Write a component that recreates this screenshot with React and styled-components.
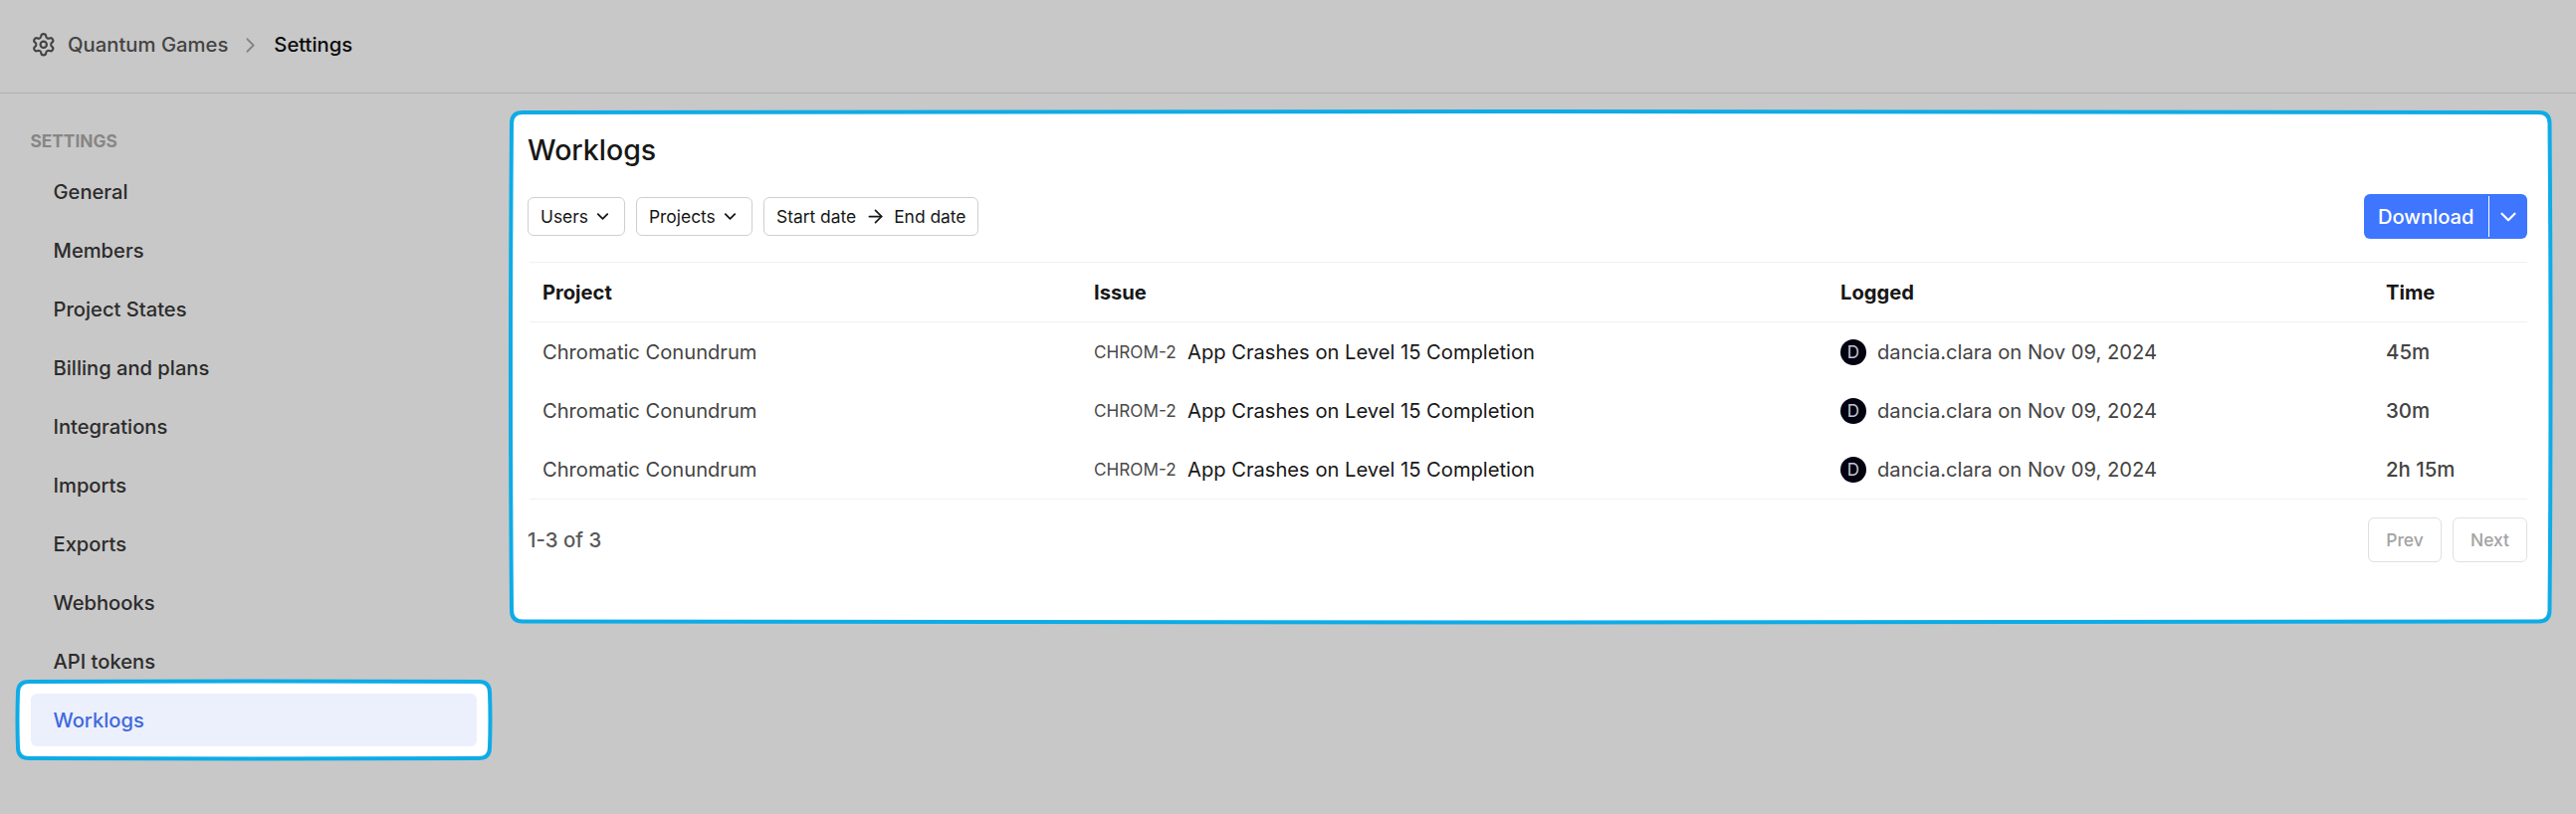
import React from 'react';
import styled, { createGlobalStyle } from 'styled-components';
import { Settings, ChevronRight, ChevronDown, ArrowRight } from 'lucide-react';

const GlobalStyle = createGlobalStyle`
  *, *::before, *::after { box-sizing: border-box; }
  body { margin: 0; background: #c8c8c8; }
  button { font: inherit; background: none; border: 0; padding: 0; margin: 0; color: inherit; }
`;

const Page = styled.div`
  display: flex;
  flex-direction: column;
  width: 100%;
  height: 818px;
  overflow: hidden;
  background: #c8c8c8;
  color: #171717;
  font-family: Inter, 'Liberation Sans', sans-serif;
  font-size: 20.15px;
  line-height: 28px;
`;

const Header = styled.header`
  display: flex;
  align-items: center;
  height: 94px;
  padding: 0 0 3px 31px;
  border-bottom: 1px solid #b0b0b0;
  font-size: 20.25px;
  font-weight: 500;
  color: #444;
`;

const CrumbLink = styled.a`
  display: flex;
  align-items: center;
  gap: 11.5px;
  margin-right: 10px;
`;

const CrumbCurrent = styled.span`
  margin-left: 11px;
  color: #0c0c0c;
`;

const Body = styled.div`
  display: flex;
  flex: 1;
  align-items: flex-start;
`;

const Sidebar = styled.aside`
  width: 513px;
  padding: 34px 34px 0 31px;
`;

const SidebarTitle = styled.h2`
  margin: 0 0 10px -0.5px;
  font-size: 17.3px;
  line-height: 28px;
  font-weight: 700;
  color: #868686;
`;

const NavList = styled.nav`
  display: flex;
  flex-direction: column;
  gap: 6px;
`;

const NavItem = styled.a`
  position: relative;
  display: flex;
  align-items: center;
  height: 53px;
  padding-left: 22.5px;
  border-radius: 6px;
  font-weight: 500;
  color: ${(p) => (p.$active ? '#4069dc' : '#2c2c2c')};
  background: ${(p) => (p.$active ? '#ecf0fd' : 'transparent')};
  isolation: isolate;
`;

const Outline = styled.svg`
  position: absolute;
  z-index: -1;
  left: ${(p) => p.$left}px;
  top: ${(p) => p.$top}px;
  overflow: visible;
`;

const ActiveItem = styled.div`
  position: relative;
  isolation: isolate;
`;

const Panel = styled.main`
  position: relative;
  isolation: isolate;
  width: 2050px;
  height: 514px;
  margin-top: 18px;
  padding: 20px 24px 0 17px;
`;

const Title = styled.h1`
  margin: 0;
  font-size: 28.5px;
  line-height: 38px;
  font-weight: 500;
`;

const Toolbar = styled.div`
  display: flex;
  align-items: center;
  justify-content: space-between;
  height: 45px;
  margin-top: 25px;
`;

const Filters = styled.div`
  display: flex;
  gap: 11px;
`;

const FilterButton = styled.button`
  display: flex;
  align-items: center;
  gap: ${(p) => p.$gap || 5}px;
  width: ${(p) => p.$width}px;
  height: 39px;
  padding-left: 12px;
  border: 1px solid #cfcfcf;
  border-radius: 6px;
  font-size: 17.4px;
  white-space: nowrap;
`;

const DownloadGroup = styled.div`
  display: flex;
  align-items: center;
  width: 164px;
  height: 45px;
  border-radius: 6px;
  background: #3f76ff;
  color: #fff;
  font-weight: 500;
`;

const DownloadButton = styled.button`
  width: 126px;
  height: 41px;
  padding-left: 14px;
  border-right: 1px solid #fff;
  text-align: left;
`;

const DownloadToggle = styled.button`
  display: flex;
  flex: 1;
  align-items: center;
  justify-content: center;
`;

const Table = styled.div`
  margin: 23px 0 0 2px;
  border-top: 1px solid #f0f0f0;
  border-bottom: 1px solid #f0f0f0;
`;

const Row = styled.div`
  display: grid;
  grid-template-columns: 554px 750px 548px 1fr;
  align-items: center;
  height: ${(p) => (p.$head ? 60 : 59)}px;
  padding-left: 13px;
  border-bottom: ${(p) => (p.$head ? '1px solid #f0f0f0' : '0')};
  font-weight: ${(p) => (p.$head ? 700 : 400)};
`;

const Cell = styled.div`
  display: flex;
  align-items: center;
  font-size: ${(p) => (p.$medium ? '20.4px' : 'inherit')};
  font-weight: ${(p) => (p.$medium ? 500 : 'inherit')};
  color: ${(p) => (p.$muted ? '#444' : '#171717')};
`;

const IssueKey = styled.span`
  width: 94px;
  font-size: 17.15px;
  color: #4a4a4a;
`;

const Avatar = styled.span`
  display: flex;
  align-items: center;
  justify-content: center;
  width: 26px;
  height: 26px;
  margin: 0 11px 0 0;
  border-radius: 50%;
  background: #020210;
  color: #c4c4d2;
  font-size: 17px;
`;

const Pagination = styled.footer`
  display: flex;
  align-items: center;
  justify-content: space-between;
  height: 45px;
  margin-top: 18px;
  font-size: 20.4px;
  font-weight: 500;
  color: #5a5a5a;
`;

const PageButtons = styled.div`
  display: flex;
  gap: 11px;
`;

const PageButton = styled.button`
  width: ${(p) => p.$width}px;
  height: 45px;
  border: 1px solid #e0e0e0;
  border-radius: 6px;
  font-size: 17.4px;
  font-weight: 500;
  color: #a3a3a3;
`;

const navItems = ['General', 'Members', 'Project States', 'Billing and plans', 'Integrations', 'Imports', 'Exports', 'Webhooks', 'API tokens'];
const durations = ['45m', '30m', '2h 15m'];

function HighlightOutline({ width: w, height: h, left, top, bulge: b }) {
  const r = 11;
  const d = `M${r} 0 Q${w / 2} ${-b} ${w - r} 0 Q${w} 0 ${w} ${r} Q${w + b} ${h / 2} ${w} ${h - r} Q${w} ${h} ${w - r} ${h} Q${w / 2} ${h + b} ${r} ${h} Q0 ${h} 0 ${h - r} Q${-b} ${h / 2} 0 ${r} Q0 0 ${r} 0Z`;
  return (
    <Outline width={w} height={h} $left={left} $top={top} aria-hidden="true">
      <path d={d} fill="#fff" stroke="#0eace6" strokeWidth="4" />
    </Outline>
  );
}

export default function App() {
  return (
    <Page>
      <GlobalStyle />
      <Header>
        <CrumbLink><Settings size={25.5} strokeWidth={2} />Quantum Games</CrumbLink>
        <ChevronRight size={25} strokeWidth={1.7} color="#858585" />
        <CrumbCurrent>Settings</CrumbCurrent>
      </Header>
      <Body>
        <Sidebar>
          <SidebarTitle>SETTINGS</SidebarTitle>
          <NavList>
            {navItems.map((name) => <NavItem key={name}>{name}</NavItem>)}
            <ActiveItem>
              <HighlightOutline width={474} height={77} left={-13.5} top={-12} bulge={1} />
              <NavItem $active>Worklogs</NavItem>
            </ActiveItem>
          </NavList>
        </Sidebar>
        <Panel>
          <HighlightOutline width={2047.5} height={511.5} left={1.2} top={0.8} bulge={2} />
          <Title>Worklogs</Title>
          <Toolbar>
            <Filters>
              <FilterButton $width={98}>Users <ChevronDown size={19} strokeWidth={2.3} /></FilterButton>
              <FilterButton $width={117}>Projects <ChevronDown size={19} strokeWidth={2.3} /></FilterButton>
              <FilterButton $width={216} $gap={8.5}>Start date <ArrowRight size={21} strokeWidth={2} /> End date</FilterButton>
            </Filters>
            <DownloadGroup>
              <DownloadButton>Download</DownloadButton>
              <DownloadToggle aria-label="More download options"><ChevronDown size={26} strokeWidth={2} /></DownloadToggle>
            </DownloadGroup>
          </Toolbar>
          <Table>
            <Row $head>
              <Cell>Project</Cell><Cell>Issue</Cell><Cell>Logged</Cell><Cell>Time</Cell>
            </Row>
            {durations.map((time) => (
              <Row key={time}>
                <Cell $muted>Chromatic Conundrum</Cell>
                <Cell><IssueKey>CHROM-2</IssueKey>App Crashes on Level 15 Completion</Cell>
                <Cell $muted><Avatar>D</Avatar>dancia.clara on Nov 09, 2024</Cell>
                <Cell $muted $medium>{time}</Cell>
              </Row>
            ))}
          </Table>
          <Pagination>
            <span>1-3 of 3</span>
            <PageButtons>
              <PageButton $width={74}>Prev</PageButton>
              <PageButton $width={75}>Next</PageButton>
            </PageButtons>
          </Pagination>
        </Panel>
      </Body>
    </Page>
  );
}
